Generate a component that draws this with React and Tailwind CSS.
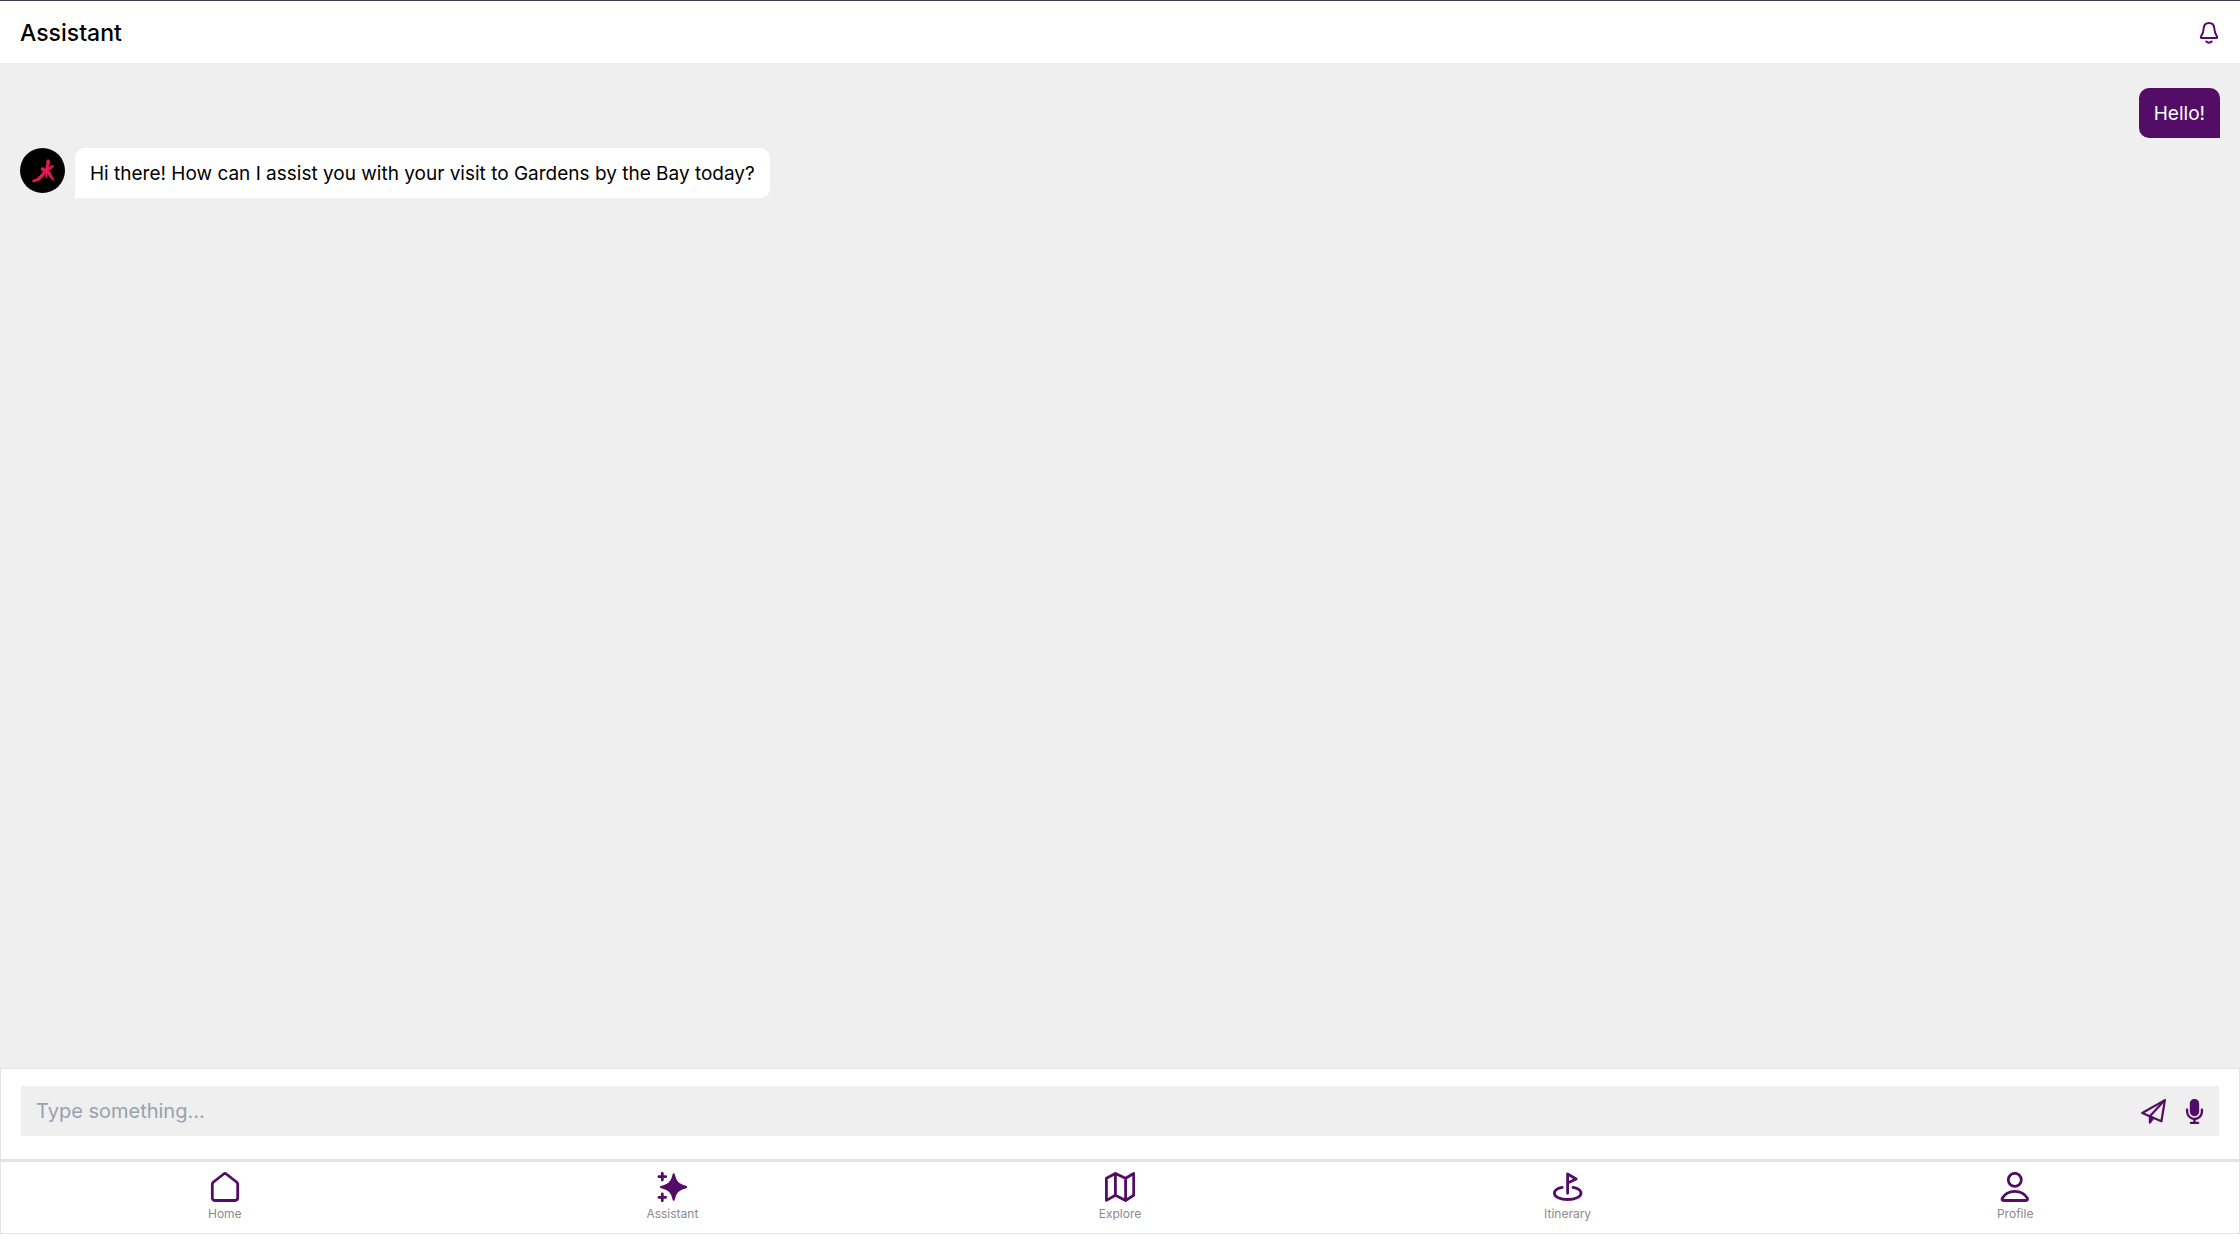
import React, { useState } from "react";
import { FaMicrophone } from "react-icons/fa";

const BellIcon = () => (
    <svg
        className="w-[22px] h-[22px]"
        viewBox="0 0 22 22"
        fill="none"
        stroke="currentColor"
        strokeWidth="2"
        strokeLinecap="round"
        strokeLinejoin="round"
    >
        <path d="M11 1C7.8 1 5.9 3.3 5.7 6.3C5.5 10.2 5 11.7 3.2 14.2C2.5 15.3 2.7 16.1 3.6 16.1H18.4C19.3 16.1 19.5 15.3 18.8 14.2C17 11.7 16.5 10.2 16.3 6.3C16.1 3.3 14.2 1 11 1Z" />
        <path d="M8.3 19.5C9.7 21 12.3 21 13.7 19.5" />
    </svg>
);

const SendIcon = () => (
    <svg
        className="w-[25px] h-[25px]"
        viewBox="0 0 25 25"
        fill="none"
        stroke="currentColor"
        strokeWidth="2.2"
        strokeLinejoin="round"
    >
        <path d="M23.9 1.1L1.2 14L20.4 22.2Z" />
        <path d="M23.9 1.1L8.8 17.2" />
        <path d="M8.9 17.4V23.7L12.2 19.2Z" fill="currentColor" />
    </svg>
);

const HomeIcon = () => (
    <path d="M2.3 12.3C2.3 11.2 2.6 10.6 3.5 10L13.7 2C14.6 1.3 15.4 1.3 16.3 2L26.5 10C27.4 10.6 27.7 11.2 27.7 12.3V25.6C27.7 27.4 26.6 28.5 24.8 28.5H5.2C3.4 28.5 2.3 27.4 2.3 25.6Z" />
);

const SparklesIcon = () => (
    <>
        <path
            d="M16.7 2.3C18.2 10 21.2 12.7 29.7 15C21.2 17.3 18.2 20 16.7 27.7C15.2 20 12.2 17.3 3.9 15C12.2 12.7 15.2 10 16.7 2.3Z"
            fill="currentColor"
            strokeWidth="2"
        />
        <path d="M5.3 1.3V8.1M1.9 4.7H8.7M5.3 21.9V28.7M1.9 25.3H8.7" />
    </>
);

const MapIcon = () => (
    <path d="M1.4 6.2L10.4 1.4L20.6 6.2L28.7 1.5V23.3L20.6 28.5L10.4 23.3L1.4 28.4ZM10.4 1.4V23.3M20.6 6.2V28.5" />
);

const FlagIcon = () => (
    <>
        <path d="M14.6 21.3V2L23.2 7L14.6 11" />
        <path d="M9.2 15.4C4.4 16.3 1.4 18.7 1.4 21.3C1.4 24.9 7 27.5 14.6 27.5C22.2 27.5 28 24.9 28 21.3C28 18.7 24.8 16.3 20 15.4" />
    </>
);

const ProfileIcon = () => (
    <>
        <circle cx="14.8" cy="7.8" r="6.5" />
        <path d="M14.8 19.3C8.8 19.3 4.7 21.9 2.3 26.2C1.6 27.5 2.2 28.5 3.5 28.5H26.1C27.4 28.5 28 27.5 27.3 26.2C24.9 21.9 20.8 19.3 14.8 19.3Z" />
    </>
);

const navItems = [
    { label: "Home", Icon: HomeIcon },
    { label: "Assistant", Icon: SparklesIcon },
    { label: "Explore", Icon: MapIcon },
    { label: "Itinerary", Icon: FlagIcon },
    { label: "Profile", Icon: ProfileIcon },
];

// Dragonfly logo of the assistant
const Avatar = () => (
    <svg className="w-[45px] h-[45px] shrink-0" viewBox="0 0 45 45">
        <circle cx="22.5" cy="22.5" r="22.5" fill="#000" />
        <path
            d="M11.8 33C13 31.4 15.4 31.2 17.4 29.7C19.8 28 21.2 25.5 23.3 23.3C21 23.2 20 20.4 21.4 19.5C22.8 18.7 24.4 19.5 25 20.7C26 18.2 26.5 16.2 26.3 14C26.2 12 27.3 10.9 28.8 11.6C30.9 12.6 30.1 16 28.6 19.2C30 18.5 31 17.3 33.6 17C34.5 18.6 32.1 21.2 28.8 22.3C31.2 25.5 33.7 29.8 34.5 33.3C31.8 32.2 28.7 28.3 27.4 25.2C27.4 27 27.4 28.8 26.5 30.7C25.2 29.2 25.3 27 25.3 25.2C23.2 29 19.3 34 14.6 34C13.2 34.1 12.3 33.8 11.8 33Z"
            fill="#e5174f"
        />
    </svg>
);

function App() {
    const [message, setMessage] = useState("");

    return (
        <div className="min-h-screen flex flex-col bg-white text-black pb-[26px] font-[Inter,sans-serif]">
            <header className="flex items-center justify-between h-[63px] px-5 pt-0.5 border-t border-[#3f3f50] bg-white">
                <h1 className="text-[23px] font-medium">Assistant</h1>
                <button aria-label="Notifications" className="text-[#540d66]">
                    <BellIcon />
                </button>
            </header>

            <main className="flex-1 flex flex-col gap-[10px] px-5 pt-[25px] bg-[#efefef] text-[19px] leading-5">
                <div className="flex justify-end">
                    <p className="px-[15px] pt-4 pb-[14px] rounded-[10px] rounded-br-none bg-[#540d66] text-white">
                        Hello!
                    </p>
                </div>
                <div className="flex items-start gap-[10px]">
                    <Avatar />
                    <p className="px-[15px] pt-4 pb-[14px] rounded-[10px] rounded-bl-none bg-white">
                        Hi there! How can I assist you with your visit to
                        Gardens by the Bay today?
                    </p>
                </div>
            </main>

            <form
                className="border border-[#e2e2e7] px-5 pt-[17px] pb-[23px]"
                onSubmit={(e) => e.preventDefault()}
            >
                <div className="flex items-center h-[50px] pl-[15px] pr-3 gap-4 bg-[#efefef] text-[#540d66]">
                    <input
                        type="text"
                        aria-label="Message"
                        placeholder="Type something..."
                        value={message}
                        onChange={(e) => setMessage(e.target.value)}
                        className="flex-1 min-w-0 text-xl text-black placeholder:text-gray-400 outline-none"
                    />
                    <button type="submit" aria-label="Send">
                        <SendIcon />
                    </button>
                    <button type="button" aria-label="Record voice">
                        <FaMicrophone size={25} />
                    </button>
                </div>
            </form>

            <nav className="flex border border-t-2 border-[#e2e2e7] pt-[10px] pb-[11px]">
                {navItems.map(({ label, Icon }) => (
                    <a
                        key={label}
                        href="#"
                        className="flex-1 flex flex-col items-center gap-1 text-xs text-[#8a8a8a]"
                    >
                        <svg
                            className="w-[30px] h-[30px] text-[#540d66]"
                            viewBox="0 0 30 30"
                            fill="none"
                            stroke="currentColor"
                            strokeWidth="2.8"
                            strokeLinecap="round"
                            strokeLinejoin="round"
                        >
                            <Icon />
                        </svg>
                        {label}
                    </a>
                ))}
            </nav>
        </div>
    );
}

export default App;
